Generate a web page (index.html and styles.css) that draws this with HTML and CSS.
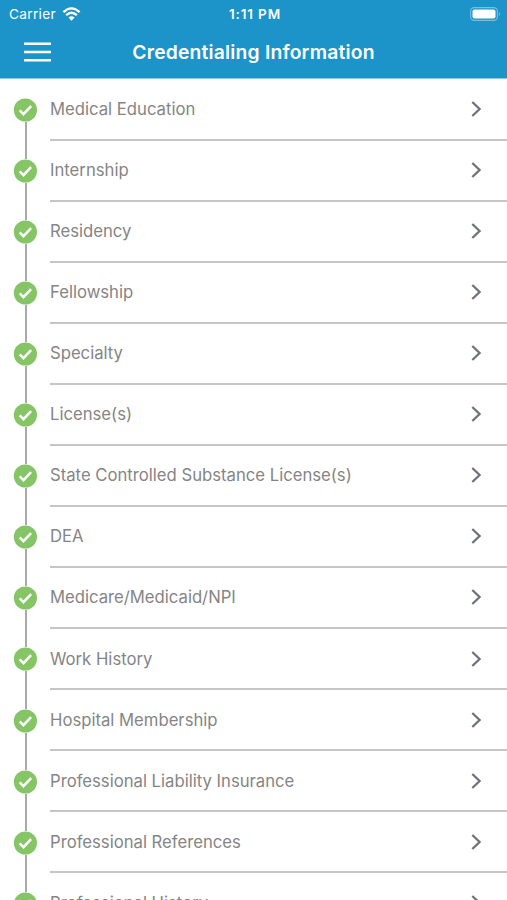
FILE: index.html
```html
<!DOCTYPE html>
<html lang="en">
<head>
<meta charset="utf-8">
<meta name="viewport" content="width=device-width, initial-scale=1">
<title>Credentialing Information</title>
<link rel="stylesheet" href="styles.css">
</head>
<body>
<svg class="sprite" aria-hidden="true">
  <symbol id="check" viewBox="0 0 24 24"><circle cx="12.4" cy="12" r="11.6" fill="#86c565"/><path d="M6.7 12.4 10.5 16.2 18.1 8.2" fill="none" stroke="#fff" stroke-width="2.5"/></symbol>
  <symbol id="chevron" viewBox="0 0 12 18"><path d="M2.3 2 9.6 9 2.3 16" fill="none" stroke="#6f7377" stroke-width="2.3"/></symbol>
</svg>
<header class="header">
  <div class="status">
    <div class="carrier"><span>Carrier</span>
      <svg class="wifi" viewBox="0 0 18 14"><g fill="none" stroke="#fff" stroke-width="2.3"><path d="M.9 5.2Q9-2.5 17.1 5.2"/><path d="M3.7 8.2Q9 3.2 14.3 8.2"/></g><path d="M6 10.5Q9 7.9 12 10.5L9 13.7Z" fill="#fff"/></svg>
    </div>
    <span class="time">1:11 PM</span>
    <svg class="battery" viewBox="0 0 31 14"><rect x=".6" y=".6" width="26.8" height="12.8" rx="3.8" fill="none" stroke="#79c0e0" stroke-width="1.1"/><rect x="2.5" y="2.5" width="23" height="9" rx="2" fill="#fff"/><path d="M29 5Q31 7 29 9Z" fill="#79c0e0"/></svg>
  </div>
  <div class="navbar">
    <svg class="menu" viewBox="0 0 27 20"><path d="M0 1.8H27M0 10H27M0 18.2H27" stroke="#fff" stroke-width="2.4"/></svg>
    <h1 class="title">Credentialing Information</h1>
  </div>
</header>
<ul class="list">
  <li class="row"><div class="step"><svg class="check"><use href="#check"/></svg></div><div class="item"><span>Medical Education</span><svg class="chevron"><use href="#chevron"/></svg></div></li>
  <li class="row"><div class="step"><svg class="check"><use href="#check"/></svg></div><div class="item"><span>Internship</span><svg class="chevron"><use href="#chevron"/></svg></div></li>
  <li class="row"><div class="step"><svg class="check"><use href="#check"/></svg></div><div class="item"><span>Residency</span><svg class="chevron"><use href="#chevron"/></svg></div></li>
  <li class="row"><div class="step"><svg class="check"><use href="#check"/></svg></div><div class="item"><span>Fellowship</span><svg class="chevron"><use href="#chevron"/></svg></div></li>
  <li class="row"><div class="step"><svg class="check"><use href="#check"/></svg></div><div class="item"><span>Specialty</span><svg class="chevron"><use href="#chevron"/></svg></div></li>
  <li class="row"><div class="step"><svg class="check"><use href="#check"/></svg></div><div class="item"><span>License(s)</span><svg class="chevron"><use href="#chevron"/></svg></div></li>
  <li class="row"><div class="step"><svg class="check"><use href="#check"/></svg></div><div class="item"><span>State Controlled Substance License(s)</span><svg class="chevron"><use href="#chevron"/></svg></div></li>
  <li class="row"><div class="step"><svg class="check"><use href="#check"/></svg></div><div class="item"><span>DEA</span><svg class="chevron"><use href="#chevron"/></svg></div></li>
  <li class="row"><div class="step"><svg class="check"><use href="#check"/></svg></div><div class="item"><span>Medicare/Medicaid/NPI</span><svg class="chevron"><use href="#chevron"/></svg></div></li>
  <li class="row"><div class="step"><svg class="check"><use href="#check"/></svg></div><div class="item"><span>Work History</span><svg class="chevron"><use href="#chevron"/></svg></div></li>
  <li class="row"><div class="step"><svg class="check"><use href="#check"/></svg></div><div class="item"><span>Hospital Membership</span><svg class="chevron"><use href="#chevron"/></svg></div></li>
  <li class="row"><div class="step"><svg class="check"><use href="#check"/></svg></div><div class="item"><span>Professional Liability Insurance</span><svg class="chevron"><use href="#chevron"/></svg></div></li>
  <li class="row"><div class="step"><svg class="check"><use href="#check"/></svg></div><div class="item"><span>Professional References</span><svg class="chevron"><use href="#chevron"/></svg></div></li>
  <li class="row"><div class="step"><svg class="check"><use href="#check"/></svg></div><div class="item"><span>Professional History</span><svg class="chevron"><use href="#chevron"/></svg></div></li>
</ul>
</body>
</html>
```
FILE: styles.css
```css
* { box-sizing: border-box; }
body {
  margin: 0;
  height: 900px;
  overflow: hidden;
  display: flex;
  flex-direction: column;
  background: #fff;
  font-family: Inter, "Liberation Sans", sans-serif;
}
svg { display: block; flex: none; }
.sprite { display: none; }
.header {
  flex: none;
  height: 79px;
  background: #1d94c9;
  border-bottom: 1px solid #8ccbe6;
  color: #fff;
}
.status {
  height: 26px;
  display: grid;
  grid-template-columns: 1fr auto 1fr;
  align-items: center;
  padding: 1px 6px 0 9px;
  font-size: 13.7px;
}
.carrier { display: flex; align-items: center; gap: 6px; letter-spacing: .3px; }
.wifi { width: 19px; height: 14px; }
.time { font-weight: 600; font-size: 13.5px; letter-spacing: .85px; }
.battery { width: 31px; height: 14px; justify-self: end; }
.navbar {
  height: 52px;
  display: grid;
  grid-template-columns: 27px 1fr 27px;
  align-items: center;
  padding: 0 24px;
}
.menu { width: 27px; height: 20px; }
.title {
  margin: 0;
  text-align: center;
  font-size: 19.3px;
  font-weight: 600;
  letter-spacing: .2px;
  line-height: 24px;
}
.list { flex: 1; min-height: 0; overflow: hidden; margin: 0; padding: .5px 0 0; list-style: none; }
.row { display: flex; height: 61.07px; }
.step {
  width: 50px;
  display: flex;
  flex-direction: column;
  align-items: flex-start;
  padding-left: 13px;
}
.step::before, .step::after { content: ""; width: 2px; margin-left: 12px; background: #a6a9ad; }
.step::before { height: 18.4px; }
.step::after { flex: 1; }
.row:first-child .step::before { background: none; }
.check { width: 24px; height: 24px; }
.item {
  flex: 1;
  display: flex;
  align-items: center;
  justify-content: space-between;
  padding: 0 25px .2px 0;
  border-bottom: 2px solid #c6c6c8;
  color: #858585;
  font-size: 16.68px;
}
.chevron { width: 12px; height: 18px; }
```
